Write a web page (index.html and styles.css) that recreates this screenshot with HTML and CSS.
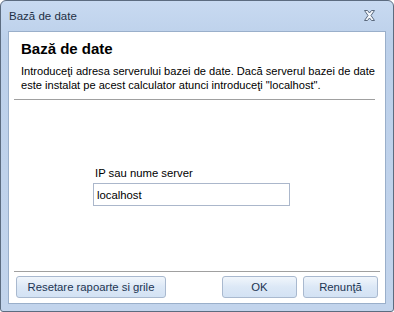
FILE: index.html
```html
<!DOCTYPE html>
<html lang="ro">
<head>
  <meta charset="UTF-8">
  <title>Bază de date</title>
  <link rel="stylesheet" href="styles.css">
</head>
<body>
  <div class="window">
    <div class="titlebar">
      <span class="title">Bază de date</span>
      <svg class="close" width="13" height="11" viewBox="0 0 13 11">
        <path d="M1.5 0.5 H4.5 L6.5 3 L8.5 0.5 H11.5 L8 5.5 L11.5 10.5 H8.5 L6.5 8 L4.5 10.5 H1.5 L5 5.5 Z" fill="#f4f7fb" stroke="#5b6a7e" stroke-width="1" stroke-linejoin="round"/>
      </svg>
    </div>
    <div class="client">
      <div class="header">
        <h2>Bază de date</h2>
        <p>Introduceţi adresa serverului bazei de date. Dacă serverul bazei de date<br>este instalat pe acest calculator atunci introduceţi "localhost".</p>
      </div>
      <div class="body">
        <div class="field">
          <label for="server">IP sau nume server</label>
          <input type="text" id="server" value="localhost">
        </div>
      </div>
      <div class="footer">
        <button class="btn btn-wide">Resetare rapoarte si grile</button>
        <div class="actions">
          <button class="btn">OK</button>
          <button class="btn">Renunţă</button>
        </div>
      </div>
    </div>
  </div>
</body>
</html>
```

FILE: styles.css
```css
* {
  margin: 0;
  padding: 0;
  box-sizing: border-box;
  font-family: "Liberation Sans", Arial, sans-serif;
}

body {
  background: #fff;
}

.window {
  width: 394px;
  height: 312px;
  border: 1px solid #5c6c80;
  border-radius: 6px 6px 3px 3px;
  background: linear-gradient(#c8daf1, #bcd0ea 40px, #c2d4ec);
  display: flex;
  flex-direction: column;
  padding: 0 7px 7px;
}

.titlebar {
  height: 30px;
  display: flex;
  align-items: center;
  justify-content: space-between;
  padding: 0 10px 1px 1px;
}

.title {
  font-size: 11.5px;
  color: #1e2f45;
}

.close {
  display: block;
  margin-top: -1px;
}

.client {
  flex: 1;
  background: #fff;
  border: 1px solid #9aafca;
  display: flex;
  flex-direction: column;
}

.header {
  margin: 0 10px 0 5px;
  padding: 8px 0 7px 7px;
  border-bottom: 1px solid #a0a0a0;
}

h2 {
  font-size: 15px;
  color: #000;
  margin-bottom: 7px;
}

.header p {
  font-size: 11.1px;
  line-height: 14px;
  color: #000;
  white-space: nowrap;
}

.body {
  flex: 1;
  display: flex;
  justify-content: center;
  padding-top: 67px;
}

.field {
  width: 197px;
  margin-right: 11px;
}

.field label {
  display: block;
  font-size: 11.3px;
  color: #000;
  padding-left: 2px;
  margin-bottom: 4px;
}

.field input {
  width: 197px;
  height: 23px;
  border: 1px solid #abb7cb;
  padding: 0 3px;
  font-size: 11.3px;
  color: #000;
  outline: none;
}

.footer {
  margin: 0 5px 0 5px;
  border-top: 1px solid #a0a0a0;
  padding: 4px 2px 5px 2px;
  display: flex;
  justify-content: space-between;
}

.actions {
  display: flex;
  gap: 6px;
}

.btn {
  width: 75px;
  height: 22px;
  border: 1px solid #a9b9cf;
  border-radius: 3px;
  background: linear-gradient(#f1f6fc, #dce8f6 50%, #d3e2f4);
  color: #1c3553;
  font-size: 11.3px;
}

.btn-wide {
  width: 150px;
}
```
